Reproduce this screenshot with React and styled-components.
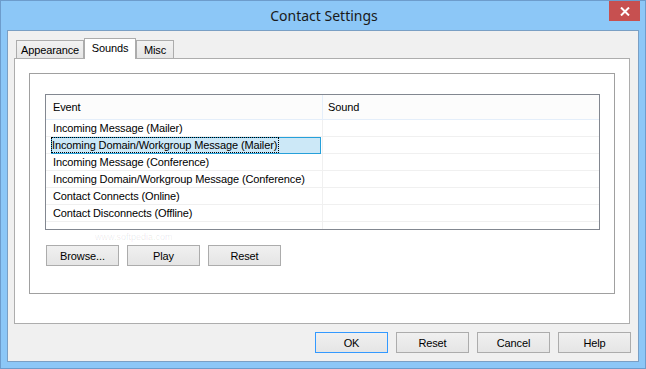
import React from "react";
import styled, { createGlobalStyle, css } from "styled-components";

const Global = createGlobalStyle`
  html, body { margin: 0; padding: 0; background: #ffffff; }
  body { font-family: "Liberation Sans", Arial, sans-serif; }
  #root { width: 646px; height: 369px; }
`;

const Window = styled.div`
  box-sizing: border-box;
  width: 646px;
  height: 369px;
  background: #8cc7f7;
  border: 1px solid #6d9ccc;
  display: flex;
  flex-direction: column;
`;

const TitleBar = styled.div`
  height: 29px;
  display: grid;
  grid-template-columns: 1fr auto 1fr;
  align-items: start;
`;

const Title = styled.div`
  grid-column: 2;
  font-family: "Noto Sans", "Open Sans", sans-serif;
  font-size: 14px;
  line-height: 29px;
  color: #1a1a1a;
  padding-left: 2px;
`;

const CloseButton = styled.div`
  grid-column: 3;
  justify-self: end;
  width: 31px;
  height: 20px;
  margin-right: 5px;
  background: #c75050;
  display: flex;
  align-items: center;
  justify-content: center;
`;

const Client = styled.div`
  box-sizing: border-box;
  flex: 1;
  margin: 0 6px 6px 6px;
  border: 1px solid #7a9fc4;
  background: #f0f0f0;
  padding: 7px 8px 8px 6px;
  display: flex;
  flex-direction: column;
  font-size: 11px;
  letter-spacing: -0.12px;
  color: #000;
`;

const TabStrip = styled.div`
  display: flex;
  align-items: flex-end;
  padding-left: 2px;
  height: 20px;
`;

const Tab = styled.div`
  box-sizing: border-box;
  height: 18px;
  width: ${(p) => p.$w}px;
  border: 1px solid #acacac;
  border-bottom: none;
  background: linear-gradient(#f2f2f2, #e6e6e6);
  display: flex;
  align-items: center;
  justify-content: center;
  padding-top: 1px;
  ${(p) =>
    p.$active &&
    css`
      height: 21px;
      margin-bottom: -1px;
      background: #ffffff;
      position: relative;
      z-index: 1;
      padding-top: 0;
      padding-bottom: 3px;
    `}
`;

const Panel = styled.div`
  box-sizing: border-box;
  width: 616px;
  height: 266px;
  border: 1px solid #adadad;
  background: #ffffff;
  padding: 14px 14px 29px 14px;
`;

const Group = styled.div`
  box-sizing: border-box;
  height: 221px;
  border: 1px solid #a0a0a0;
  padding: 20px 14px 0 15px;
  display: flex;
  flex-direction: column;
  gap: 15px;
  position: relative;
`;

const List = styled.div`
  box-sizing: border-box;
  height: 136px;
  border: 1px solid #828790;
  background: #ffffff;
  overflow: hidden;
  display: flex;
  flex-direction: column;
`;

const HeaderRow = styled.div`
  display: grid;
  grid-template-columns: 277px 1fr;
  height: 24px;
  border-bottom: 1px solid #e4eefa;
  background: #fcfcfc;
  flex: none;
`;

const HeaderCell = styled.div`
  display: flex;
  align-items: center;
  padding-left: ${(p) => p.$pl}px;
  border-right: ${(p) => (p.$divider ? "1px solid #e4eefa" : "none")};
  color: #000;
`;

const Row = styled.div`
  display: grid;
  grid-template-columns: 277px 1fr;
  height: 16px;
  border-bottom: 1px solid #f0f0f0;
  flex: none;
`;

const Cell = styled.div`
  box-sizing: border-box;
  display: flex;
  align-items: center;
  padding-left: 7px;
  white-space: nowrap;
  border-right: ${(p) => (p.$divider ? "1px solid #f0f0f0" : "none")};
  position: relative;
`;

const Selection = styled.div`
  box-sizing: border-box;
  position: absolute;
  left: 5px;
  right: 1px;
  top: 0;
  bottom: -1px;
  background: #cce8f7;
  border: 1px solid #26a0da;
`;

const FocusText = styled.span`
  position: relative;
  margin-left: -1px;
  outline: 1px dotted #000;
  outline-offset: 0;
  padding: 0 1px 0 0;
  line-height: 14px;
`;

const ButtonRow = styled.div`
  display: flex;
  gap: 8px;
  padding-left: 1px;
`;

const Button = styled.div`
  box-sizing: border-box;
  width: 73px;
  height: 21px;
  border: 1px solid ${(p) => (p.$default ? "#3399ff" : "#acacac")};
  background: linear-gradient(#f0f0f0, #e5e5e5);
  display: flex;
  align-items: center;
  justify-content: center;
  color: #000;
`;

const Footer = styled.div`
  display: flex;
  justify-content: flex-end;
  gap: 8px;
  margin-top: 8px;
  margin-right: -1px;
`;

const Watermark = styled.div`
  position: absolute;
  left: 65px;
  top: 158px;
  font-size: 9px;
  line-height: 10px;
  letter-spacing: 0;
  color: rgba(0, 0, 0, 0.09);
  pointer-events: none;
  white-space: nowrap;
`;

const events = [
  "Incoming Message (Mailer)",
  "Incoming Domain/Workgroup Message (Mailer)",
  "Incoming Message (Conference)",
  "Incoming Domain/Workgroup Message (Conference)",
  "Contact Connects (Online)",
  "Contact Disconnects (Offline)",
  "",
];

export default function App() {
  return (
    <>
      <Global />
      <Window>
        <TitleBar>
          <Title>Contact Settings</Title>
          <CloseButton>
            <svg width="10" height="9" viewBox="0 0 10 9">
              <path d="M1 0.5 L9 8.5 M9 0.5 L1 8.5" stroke="#fff" strokeWidth="2" />
            </svg>
          </CloseButton>
        </TitleBar>
        <Client>
          <TabStrip>
            <Tab $w={68}>Appearance</Tab>
            <Tab $w={52} $active>Sounds</Tab>
            <Tab $w={38}>Misc</Tab>
          </TabStrip>
          <Panel>
            <Group>
              <List>
                <HeaderRow>
                  <HeaderCell $pl={7} $divider>Event</HeaderCell>
                  <HeaderCell $pl={5}>Sound</HeaderCell>
                </HeaderRow>
                {events.map((e, i) => (
                  <Row key={i}>
                    <Cell $divider>
                      {i === 1 ? (
                        <>
                          <Selection />
                          <FocusText>{e}</FocusText>
                        </>
                      ) : (
                        e
                      )}
                    </Cell>
                    <Cell />
                  </Row>
                ))}
              </List>
              <ButtonRow>
                <Button>Browse...</Button>
                <Button>Play</Button>
                <Button>Reset</Button>
              </ButtonRow>
              <Watermark>www.softpedia.com</Watermark>
            </Group>
          </Panel>
          <Footer>
            <Button $default>OK</Button>
            <Button>Reset</Button>
            <Button>Cancel</Button>
            <Button>Help</Button>
          </Footer>
        </Client>
      </Window>
    </>
  );
}
